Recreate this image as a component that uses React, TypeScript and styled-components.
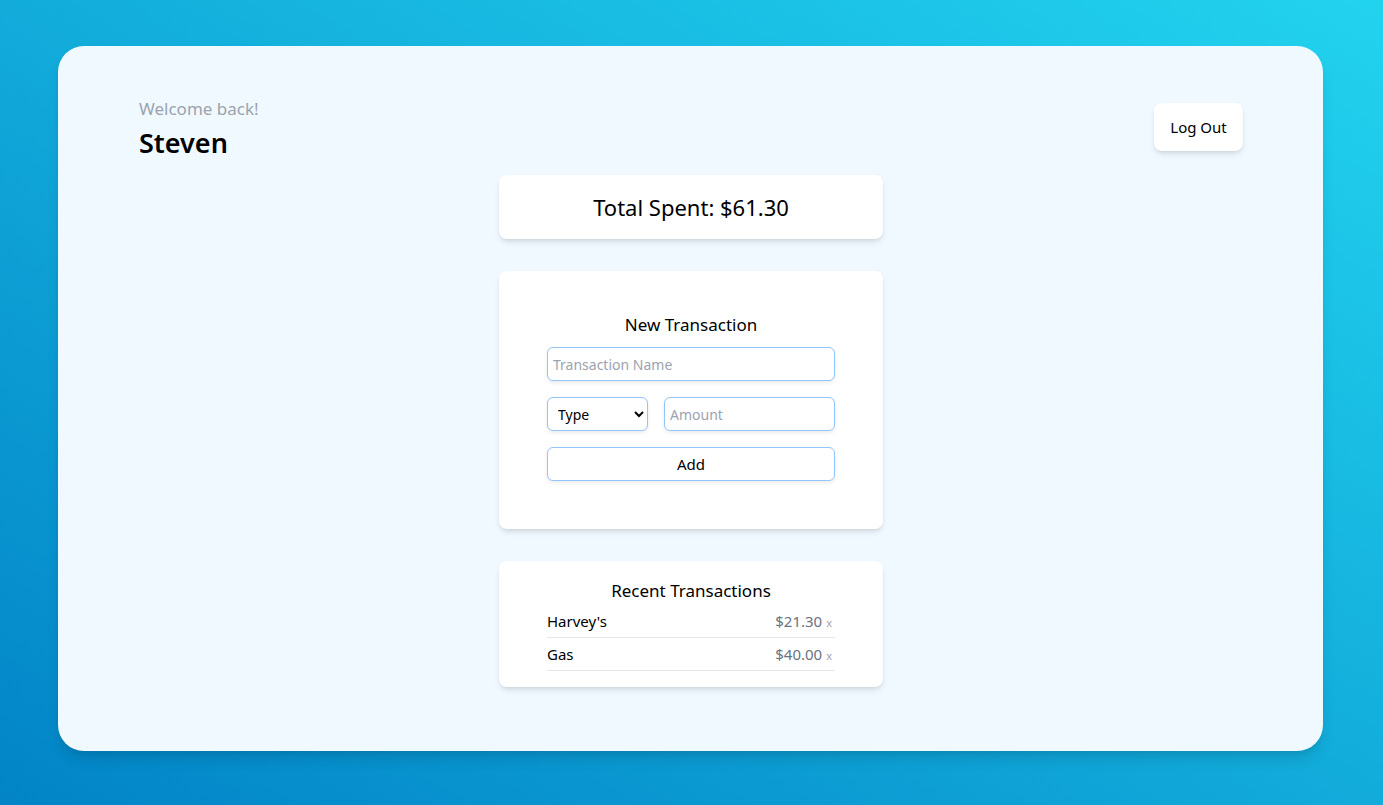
import styled, { createGlobalStyle } from 'styled-components';
import { ReactElement } from 'react';

const GlobalStyle = createGlobalStyle`
  html, body {
    margin: 0;
    padding: 0;
  }
  body {
    font-family: 'Noto Sans', 'Open Sans', sans-serif;
    color: #000;
  }
  * {
    box-sizing: border-box;
  }
`;

const Page = styled.div`
  min-height: 805px;
  padding: 46px 60px 54px 58px;
  background: linear-gradient(to top right, #0284c7, #22d3ee);
`;

const Panel = styled.main`
  height: 705px;
  background: #f0f9ff;
  border-radius: 26px;
  box-shadow: 0 10px 15px -3px rgba(0, 0, 0, 0.12), 0 4px 6px -4px rgba(0, 0, 0, 0.1);
  padding: 52px 80px 0 81px;
`;

const Header = styled.header`
  display: flex;
  justify-content: space-between;
  align-items: center;
`;

const Greeting = styled.p`
  margin: 0;
  font-size: 17px;
  line-height: 22px;
  color: #9ca3af;
`;

const Name = styled.h1`
  margin: 2px 0 0;
  font-size: 27px;
  line-height: 42px;
  font-weight: 600;
`;

const LogOutButton = styled.button`
  font-family: inherit;
  font-size: 15px;
  color: #000;
  background: #fff;
  border: none;
  border-radius: 8px;
  width: 89px;
  height: 48px;
  margin-top: -8px;
  box-shadow: 0 4px 6px -1px rgba(0, 0, 0, 0.1), 0 2px 4px -2px rgba(0, 0, 0, 0.1);
`;

const Column = styled.div`
  display: flex;
  flex-direction: column;
  align-items: center;
  gap: 32px;
  margin-top: 11px;
`;

const Card = styled.section<{ $pad: string }>`
  width: 384px;
  background: #fff;
  border-radius: 8px;
  padding: ${(p) => p.$pad};
  box-shadow: 0 4px 6px -1px rgba(0, 0, 0, 0.1), 0 2px 4px -2px rgba(0, 0, 0, 0.1);
`;

const TotalText = styled.h2`
  margin: 0;
  text-align: center;
  font-size: 22px;
  line-height: 64px;
  font-weight: 400;
`;

const CardTitle = styled.h3`
  margin: 0;
  text-align: center;
  font-size: 17px;
  line-height: 24px;
  font-weight: 400;
`;

const Form = styled.form`
  display: flex;
  flex-direction: column;
  gap: 16px;
  margin-top: 10px;
`;

const FieldRow = styled.div`
  display: flex;
  gap: 16px;
`;

const fieldStyles = `
  font-family: inherit;
  font-size: 14px;
  height: 34px;
  border: 1px solid #93c5fd;
  border-radius: 6px;
  background: #fff;
  color: #000;
  box-shadow: 0 2px 4px rgba(0, 0, 0, 0.08);
  outline: none;
`;

const TextInput = styled.input<{ $width?: string }>`
  ${fieldStyles}
  width: ${(p) => p.$width || '100%'};
  padding: 0 5px;
  &::placeholder {
    color: #9ca3af;
  }
`;

const Select = styled.select`
  ${fieldStyles}
  width: 101px;
  padding: 0 4px 0 6px;
`;

const AddButton = styled.button`
  ${fieldStyles}
  width: 100%;
  font-size: 15px;
`;

const List = styled.ul`
  list-style: none;
  margin: 2px 0 0;
  padding: 0;
`;

const Row = styled.li`
  display: flex;
  justify-content: space-between;
  align-items: center;
  height: 33px;
  border-bottom: 1px solid #e5e7eb;
  font-size: 15px;
  line-height: 20px;
`;

const Amount = styled.span`
  color: #6b7280;
`;

const Remove = styled.span`
  color: #9ca3af;
  font-size: 11px;
  line-height: 1;
  margin-left: 4px;
  margin-right: 3px;
`;

const transactions = [
  { name: "Harvey's", amount: 21.3 },
  { name: 'Gas', amount: 40 },
];

export default function App(): ReactElement {
  const total = transactions.reduce((s, t) => s + t.amount, 0);
  return (
    <Page>
      <GlobalStyle />
      <Panel>
        <Header>
          <div>
            <Greeting>Welcome back!</Greeting>
            <Name>Steven</Name>
          </div>
          <LogOutButton>Log Out</LogOutButton>
        </Header>
        <Column>
          <Card $pad="0">
            <TotalText>Total Spent: ${total.toFixed(2)}</TotalText>
          </Card>
          <Card $pad="42px 48px 48px">
            <CardTitle>New Transaction</CardTitle>
            <Form onSubmit={(e) => e.preventDefault()}>
              <TextInput placeholder="Transaction Name" />
              <FieldRow>
                <Select defaultValue="">
                  <option value="">Type</option>
                  <option value="food">Food</option>
                  <option value="gas">Gas</option>
                </Select>
                <TextInput $width="171px" placeholder="Amount" />
              </FieldRow>
              <AddButton type="submit">Add</AddButton>
            </Form>
          </Card>
          <Card $pad="18px 48px 16px">
            <CardTitle>Recent Transactions</CardTitle>
            <List>
              {transactions.map((t) => (
                <Row key={t.name}>
                  <span>{t.name}</span>
                  <span>
                    <Amount>${t.amount.toFixed(2)}</Amount>
                    <Remove>x</Remove>
                  </span>
                </Row>
              ))}
            </List>
          </Card>
        </Column>
      </Panel>
    </Page>
  );
}
